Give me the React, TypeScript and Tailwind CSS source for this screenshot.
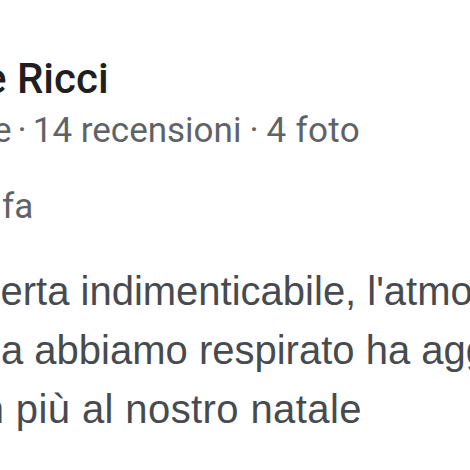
export default function App() {
  return (
    <div className="w-[470px] h-[470px] overflow-hidden bg-white">
      <div className="flex flex-col pt-[54px]">
        <div
          className="whitespace-nowrap text-[42px] leading-[50px] font-medium text-[#1f1f1f] ml-[-16px]"
          style={{ fontFamily: "Roboto, sans-serif" }}
        >
          e Ricci
        </div>
        <div
          className="mt-[2px] whitespace-nowrap text-[35px] leading-[50px] text-[#5f6368] ml-[-7px]"
          style={{ fontFamily: "Roboto, sans-serif" }}
        >
          <span>e</span>
          <span className="mx-[6px]">·</span>
          <span>14 recensioni</span>
          <span className="mx-[8px]">·</span>
          <span className="tracking-[0.3px]">4 foto</span>
        </div>
        <div
          className="mt-[26px] whitespace-nowrap text-[35px] leading-[50px] text-[#5f6368] ml-[2px]"
          style={{ fontFamily: "Roboto, sans-serif" }}
        >
          fa
        </div>
        <div
          className="mt-[30px] flex flex-col text-[40px] leading-[59px] text-[#474b50]"
          style={{ fontFamily: '"Liberation Sans", Arial, sans-serif' }}
        >
          <div className="whitespace-nowrap ml-[-84px]">scoperta indimenticabile, l'atmosfera</div>
          <div className="whitespace-nowrap ml-[1px]">a abbiamo respirato ha aggiunto</div>
          <div className="whitespace-nowrap ml-[-41px] tracking-[0.4px]">un più al nostro natale</div>
        </div>
      </div>
    </div>
  );
}
